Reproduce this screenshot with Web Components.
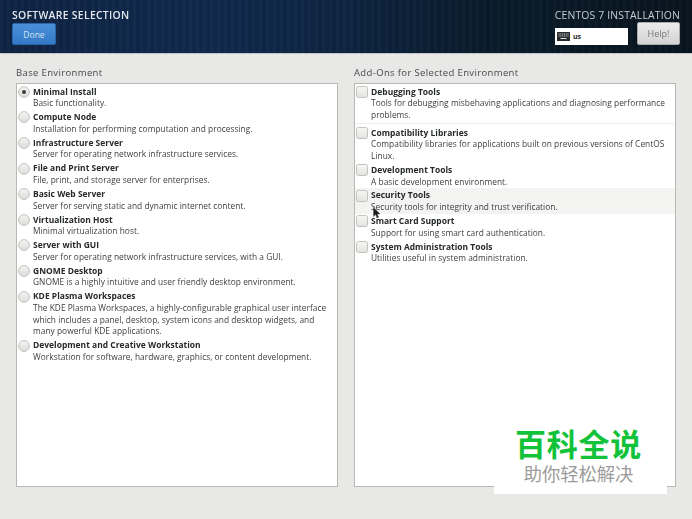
<!DOCTYPE html>
<html lang="en">
<head>
<meta charset="utf-8">
<title>Software Selection</title>
<style>
  html, body { margin: 0; height: 100%; }
  body { width: 692px; height: 519px; overflow: hidden; background: #e8e8e6; position: relative; }
</style>
</head>
<body>
<install-header title-text="SOFTWARE SELECTION" product="CENTOS 7 INSTALLATION"></install-header>
<selection-page>
  <option-panel slot="left" heading="Base Environment">
    <option-row type="radio" checked name="Minimal Install">Basic functionality.</option-row>
    <option-row type="radio" name="Compute Node">Installation for performing computation and processing.</option-row>
    <option-row type="radio" name="Infrastructure Server">Server for operating network infrastructure services.</option-row>
    <option-row type="radio" name="File and Print Server">File, print, and storage server for enterprises.</option-row>
    <option-row type="radio" name="Basic Web Server">Server for serving static and dynamic internet content.</option-row>
    <option-row type="radio" name="Virtualization Host">Minimal virtualization host.</option-row>
    <option-row type="radio" name="Server with GUI">Server for operating network infrastructure services, with a GUI.</option-row>
    <option-row type="radio" name="GNOME Desktop">GNOME is a highly intuitive and user friendly desktop environment.</option-row>
    <option-row type="radio" name="KDE Plasma Workspaces">The KDE Plasma Workspaces, a highly-configurable graphical user interface<br>which includes a panel, desktop, system icons and desktop widgets, and<br>many powerful KDE applications.</option-row>
    <option-row type="radio" name="Development and Creative Workstation">Workstation for software, hardware, graphics, or content development.</option-row>
  </option-panel>
  <option-panel slot="right" heading="Add-Ons for Selected Environment">
    <option-row type="check" separated name="Debugging Tools">Tools for debugging misbehaving applications and diagnosing performance<br>problems.</option-row>
    <option-row type="check" name="Compatibility Libraries">Compatibility libraries for applications built on previous versions of CentOS<br>Linux.</option-row>
    <option-row type="check" name="Development Tools">A basic development environment.</option-row>
    <option-row type="check" hover name="Security Tools">Security tools for integrity and trust verification.</option-row>
    <option-row type="check" name="Smart Card Support">Support for using smart card authentication.</option-row>
    <option-row type="check" name="System Administration Tools">Utilities useful in system administration.</option-row>
  </option-panel>
</selection-page>
<mouse-cursor></mouse-cursor>
<watermark-badge></watermark-badge>

<script>
const UI_FONT = '"Open Sans", "Liberation Sans", sans-serif';

class InstallHeader extends HTMLElement {
  connectedCallback() {
    this.attachShadow({ mode: 'open' });
    this.shadowRoot.innerHTML = `
      <style>
        :host {
          display: flex;
          justify-content: space-between;
          box-sizing: border-box;
          height: 54px;
          padding: 9px 12px 0 12px;
          font-family: ${UI_FONT};
          background:
            repeating-linear-gradient(90deg, rgba(255,255,255,.018) 0 3px, rgba(0,0,0,.018) 3px 7px),
            linear-gradient(90deg, #0e2342 0%, #10294c 30%, #0d2440 50%, #0a1b2b 70%, #08141e 100%);
          border-bottom: 1px solid #c3c6c9;
        }
        .title { font-size: 10.4px; line-height: 12px; color: #e4e8ee; font-weight: 600; letter-spacing: .3px; filter: blur(.3px); }
        .done {
          box-sizing: border-box;
          width: 44px; height: 22px; margin-top: 2px;
          display: flex; align-items: center; justify-content: center;
          font-size: 8.5px; color: #d5e3f2;
          background: linear-gradient(#4a90d9, #3379c6);
          border: 1px solid #2a66a8; border-radius: 2px;
        }
        .right { display: flex; flex-direction: column; align-items: flex-end; }
        .product { font-size: 10.4px; line-height: 12px; color: #c8ced4; letter-spacing: .17px; filter: blur(.3px); }
        .tools { display: flex; align-items: flex-start; gap: 9px; margin-top: 1px; }
        .layout {
          width: 73px; height: 17px; margin-top: 6px; background: #fff;
          display: flex; align-items: center; gap: 3px; padding-left: 2px; box-sizing: border-box;
          font-size: 7px; font-weight: 700; color: #222;
        }
        .help {
          box-sizing: border-box;
          width: 43px; height: 23px;
          display: flex; align-items: center; justify-content: center;
          font-size: 9px; color: #76797b; filter: grayscale(1);
          background: linear-gradient(#ecebe9, #d3d3d0);
          border: 1px solid #aaa; border-radius: 2px;
        }
      </style>
      <div>
        <div class="title">${this.getAttribute('title-text')}</div>
        <div class="done">Done</div>
      </div>
      <div class="right">
        <div class="product">${this.getAttribute('product')}</div>
        <div class="tools">
          <div class="layout">
            <svg width="13" height="9" viewBox="0 0 13 9">
              <rect width="13" height="9" rx=".5" fill="#26282a"/>
              <path d="M1.5 2h10M1.5 4h10" stroke="#e8e8e8" stroke-width=".9" stroke-dasharray="1.1 .7"/>
              <path d="M3.5 6.5h6" stroke="#e8e8e8" stroke-width="1"/>
            </svg>
            <span>us</span>
          </div>
          <div class="help">Help!</div>
        </div>
      </div>
    `;
  }
}

class SelectionPage extends HTMLElement {
  connectedCallback() {
    this.attachShadow({ mode: 'open' });
    this.shadowRoot.innerHTML = `
      <style>
        :host {
          display: grid;
          grid-template-columns: 322px 322px;
          justify-content: space-between;
          padding: 13px 16px 0 16px;
        }
      </style>
      <slot name="left"></slot>
      <slot name="right"></slot>
    `;
  }
}

class OptionPanel extends HTMLElement {
  connectedCallback() {
    this.attachShadow({ mode: 'open' });
    this.shadowRoot.innerHTML = `
      <style>
        :host { display: block; font-family: ${UI_FONT}; }
        h2 {
          margin: 0 0 4px 0; font-size: 9.5px; line-height: 12px; font-weight: 400;
          color: #45494c; letter-spacing: .36px; filter: blur(.3px);
        }
        .box {
          box-sizing: border-box;
          height: 404px;
          background: #fff;
          border: 1px solid #b8b8b5;
          padding-top: .6px;
        }
      </style>
      <h2>${this.getAttribute('heading')}</h2>
      <div class="box"><slot></slot></div>
    `;
  }
}

class OptionRow extends HTMLElement {
  connectedCallback() {
    const radio = this.getAttribute('type') === 'radio';
    const mark = radio
      ? `<svg width="12" height="12" viewBox="0 0 12 12">
           <defs><linearGradient id="g" x1="0" y1="0" x2="0" y2="1"><stop offset="0" stop-color="#f4f4f3"/><stop offset="1" stop-color="#dcdcd9"/></linearGradient></defs>
           <circle cx="6" cy="6" r="5.4" fill="url(#g)" stroke="#bbbbb8" stroke-width=".9"/>
           ${this.hasAttribute('checked') ? '<circle cx="6" cy="6" r="2" fill="#3a3d3f"/>' : ''}
         </svg>`
      : `<svg width="12" height="12" viewBox="0 0 12 12">
           <defs><linearGradient id="g" x1="0" y1="0" x2="0" y2="1"><stop offset="0" stop-color="#f7f7f6"/><stop offset="1" stop-color="#e2e2df"/></linearGradient></defs>
           <rect x=".5" y=".5" width="11" height="11" rx="2" fill="url(#g)" stroke="#bbbbb8" stroke-width=".9"/>
         </svg>`;
    this.attachShadow({ mode: 'open' });
    this.shadowRoot.innerHTML = `
      <style>
        :host {
          display: grid;
          grid-template-columns: 12px 1fr;
          column-gap: 3px;
          padding: 1px 0 1.2px 1px;
          color: #2e3133;
          font-size: 8.35px;
          line-height: 11.7px;
          letter-spacing: .03px;
        }
        :host([hover]) { background: #f3f3f1; }
        :host([separated]) { padding-bottom: 2.75px; border-bottom: 1px solid #eeeeec; margin-bottom: 1.15px; }
        svg { display: block; margin-top: .2px; }
        .name { font-size: 8.45px; font-weight: 700; letter-spacing: .02px; color: #26292b; white-space: nowrap; filter: blur(.3px); }
        .desc { white-space: nowrap; color: #3a3d3f; filter: blur(.3px); }
      </style>
      ${mark}
      <div>
        <div class="name">${this.getAttribute('name')}</div>
        <div class="desc"><slot></slot></div>
      </div>
    `;
  }
}

class MouseCursor extends HTMLElement {
  connectedCallback() {
    this.attachShadow({ mode: 'open' });
    this.shadowRoot.innerHTML = `
      <style>:host { position: absolute; left: 373px; top: 205px; width: 8px; height: 12px; display: block; }</style>
      <svg width="8" height="12" viewBox="0 0 8 12">
        <path d="M.5 .5 L.5 9.5 L2.6 7.6 L4 11 L5.6 10.3 L4.2 7.1 L7 7 Z" fill="#1a1c1e" stroke="#5a5d60" stroke-width=".5"/>
      </svg>
    `;
  }
}

class WatermarkBadge extends HTMLElement {
  connectedCallback() {
    this.attachShadow({ mode: 'open' });
    this.shadowRoot.innerHTML = `
      <style>
        :host {
          position: absolute; left: 494px; top: 424px; width: 173px; height: 70px;
          display: flex; flex-direction: column; align-items: center;
          background: #fff;
          font-family: "Noto Sans CJK SC", sans-serif;
        }
        .big { font-size: 31px; line-height: 36px; font-weight: 700; color: #12c33a; margin: 1px 4px 0 0; letter-spacing: .8px; }
        .small { font-size: 18.3px; line-height: 22px; color: #9b9b9b; margin: 1px 4px 0 0; }
      </style>
      <div class="big">百科全说</div>
      <div class="small">助你轻松解决</div>
    `;
  }
}

customElements.define('install-header', InstallHeader);
customElements.define('selection-page', SelectionPage);
customElements.define('option-panel', OptionPanel);
customElements.define('option-row', OptionRow);
customElements.define('mouse-cursor', MouseCursor);
customElements.define('watermark-badge', WatermarkBadge);
</script>
</body>
</html>
